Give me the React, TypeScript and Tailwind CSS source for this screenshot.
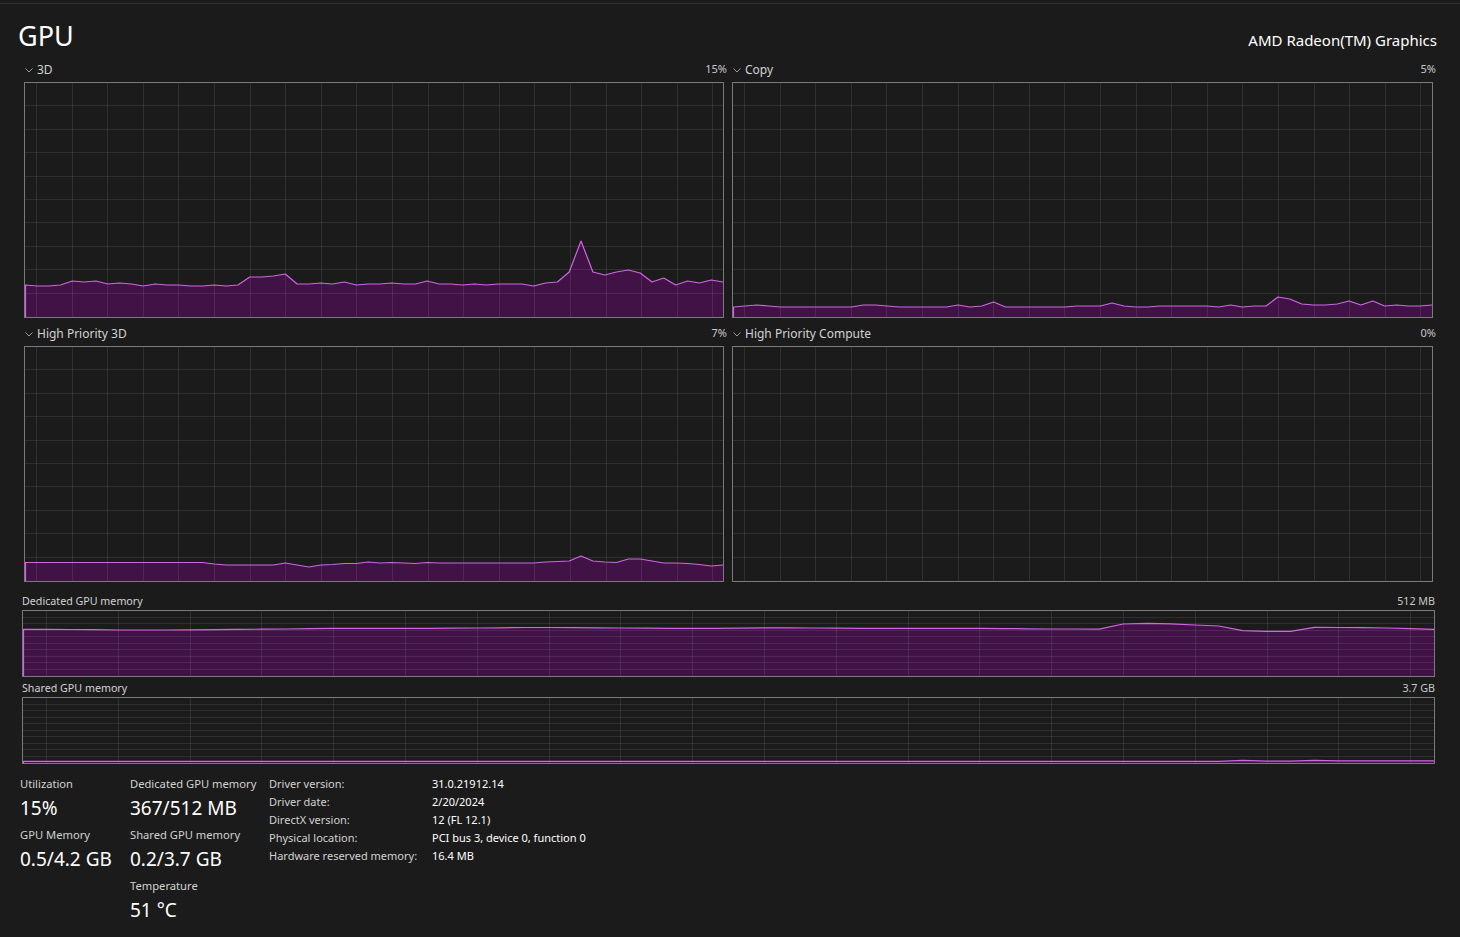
import React from "react";

const LINE = "#cf66e3";
const FILL = "#411245";

type GraphProps = {
  w: number;
  h: number;
  data?: number[];
  colStep: number;
  colStart: number;
  rows: number;
};

function Graph({ w, h, data, colStep, colStart, rows }: GraphProps) {
  const cols: number[] = [];
  for (let x = colStart; x < w; x += colStep) cols.push(Math.round(x) + 0.5);
  const hl: number[] = [];
  for (let k = 1; k < rows; k++) hl.push(Math.round((k * h) / rows) - 0.5);

  let area = "";
  let line = "";
  if (data) {
    const n = data.length;
    const pts = data.map((v, i) => [(i * w) / (n - 1), h - v]);
    area =
      `M0 ${h} ` +
      pts.map(([x, y]) => `L${x.toFixed(1)} ${y.toFixed(1)}`).join(" ") +
      ` L${w} ${h} Z`;
    line =
      `M0.5 ${h} L0.5 ${pts[0][1].toFixed(1)} ` +
      pts
        .slice(1)
        .map(([x, y]) => `L${x.toFixed(1)} ${y.toFixed(1)}`)
        .join(" ");
  }

  return (
    <svg width={w} height={h} viewBox={`0 0 ${w} ${h}`} className="block">
      {data && <path d={area} fill={FILL} />}
      <g stroke="#ffffff" strokeOpacity={0.09} strokeWidth={1} shapeRendering="crispEdges">
        {cols.map((x) => (
          <line key={"c" + x} x1={x} y1={0} x2={x} y2={h} />
        ))}
        {hl.map((y) => (
          <line key={"r" + y} x1={0} y1={y} x2={w} y2={y} />
        ))}
      </g>
      {data && <path d={line} fill="none" stroke={LINE} strokeWidth={1.2} strokeLinejoin="round" />}
    </svg>
  );
}

function Chevron() {
  return (
    <svg width="8" height="5" viewBox="0 0 8 5" className="mr-[4px] mb-[3px]">
      <path d="M0.5 0.5 L4 4 L7.5 0.5" fill="none" stroke="#9a9a9a" strokeWidth="1" />
    </svg>
  );
}

function EngineChart({
  name,
  pct,
  w,
  data,
}: {
  name: string;
  pct: string;
  w: number;
  data?: number[];
}) {
  return (
    <div className="flex flex-col">
      <div className="h-[28px] flex items-end justify-between pb-[6px] pl-[1px] -mr-[3px]">
        <div className="flex items-end">
          <Chevron />
          <span className="text-[12px] leading-[12px] text-[#d2d2d2]">{name}</span>
        </div>
        <span className="text-[11px] leading-[11px] text-[#c8c8c8] mb-[2px]">{pct}</span>
      </div>
      <div className="border border-[#7a7a7a] h-[236px]">
        <Graph w={w} h={234} data={data} colStep={35.6} colStart={11} rows={10} />
      </div>
    </div>
  );
}

function MemChart({ name, max, data, top }: { name: string; max: string; data: number[]; top: string }) {
  return (
    <div className="flex flex-col">
      <div className={`${top} flex items-end justify-between pb-[3px]`}>
        <span className="text-[10.7px] leading-[11px] text-[#d2d2d2]">{name}</span>
        <span className="text-[10.7px] leading-[11px] text-[#c8c8c8]">{max}</span>
      </div>
      <div className="border border-[#7a7a7a] h-[67px]">
        <Graph w={1411} h={65} data={data} colStep={71.8} colStart={23} rows={10} />
      </div>
    </div>
  );
}

const d3 = [
  32, 31, 31, 32, 36, 35, 36, 33, 34, 33, 31, 33, 32, 32, 31, 31, 32, 31, 32, 40, 40, 41, 43, 33, 33, 34, 33, 35, 32,
  33, 33, 34, 33, 33, 36, 33, 33, 32, 33, 32, 33, 33, 33, 31, 34, 35, 45, 76, 45, 42, 45, 47, 44, 35, 39, 32, 36, 34,
  37, 35,
];
const copy = [
  10, 11, 12, 11, 10, 10, 10, 10, 10, 10, 10, 12, 12, 11, 10, 10, 10, 10, 10, 12, 10, 11, 15, 10, 10, 10, 10, 10, 10,
  11, 11, 11, 14, 11, 10, 10, 11, 11, 11, 11, 11, 10, 12, 10, 11, 11, 20, 18, 13, 12, 12, 13, 16, 12, 16, 11, 12, 11,
  11, 12,
];
const hp3d = [
  18.5, 18.5, 18.5, 18.5, 18.5, 18.5, 18.5, 18.5, 18.5, 18.5, 18.5, 18.5, 18.5, 18.5, 18.5, 18.5, 17, 16, 16, 16, 16,
  16, 18, 16, 14, 16, 16.5, 17.5, 17.5, 19, 18, 18.5, 18, 17.5, 18.5, 18, 18, 18, 18, 18, 18, 18, 18, 18, 19, 19.5,
  20, 25, 20, 19, 18.5, 22, 22, 20, 18, 18, 17.5, 16.5, 15, 16,
];
const dedicated = [
  46.7, 46.7, 46.5, 46.3, 46, 46, 46, 46.2, 46.4, 46.6, 46.8, 47, 47.4, 47.6, 47.6, 47.6, 47.6, 47.6, 47.8, 48, 48.2,
  48.5, 48.5, 48.4, 48.2, 48, 47.8, 47.6, 47.6, 47.6, 47.8, 48.2, 48.2, 48, 47.8, 47.6, 47.6, 47.6, 47.6, 47.6, 47.6,
  47.4, 47.2, 47, 47, 46.8, 52, 52.7, 52.2, 51, 50, 45.3, 44.7, 44.7, 48.7, 48.5, 48.3, 48, 47.3, 46.7,
];
const shared = [
  1.6, 1.6, 1.6, 1.6, 1.6, 1.6, 1.6, 1.6, 1.6, 1.6, 1.6, 1.6, 1.6, 1.6, 1.6, 1.6, 1.6, 1.6, 1.6, 1.6, 1.6, 1.6, 1.6,
  1.6, 1.6, 1.6, 1.6, 1.6, 1.6, 1.6, 1.6, 1.6, 1.6, 1.6, 1.6, 1.6, 1.6, 1.6, 1.6, 1.6, 1.6, 1.6, 1.6, 1.6, 1.6, 1.6,
  1.6, 1.6, 1.6, 1.6, 1.6, 2.6, 1.8, 1.9, 2.6, 2.2, 2.2, 2.2, 2.2, 2.2,
];

function Stat({ label, value }: { label: string; value: string }) {
  return (
    <div className="flex flex-col mb-[6px]">
      <span className="text-[11.2px] leading-[16px] text-[#d2d2d2] mb-[3px] whitespace-nowrap">{label}</span>
      <span className="text-[19px] leading-[26px] text-white whitespace-nowrap">{value}</span>
    </div>
  );
}

const info: [string, string][] = [
  ["Driver version:", "31.0.21912.14"],
  ["Driver date:", "2/20/2024"],
  ["DirectX version:", "12 (FL 12.1)"],
  ["Physical location:", "PCI bus 3, device 0, function 0"],
  ["Hardware reserved memory:", "16.4 MB"],
];

export default function App() {
  return (
    <div className="min-h-[937px] w-full bg-[#1b1b1b] text-[#d6d6d6] font-['Noto_Sans',sans-serif] overflow-hidden">
      <div className="h-[3px]" />
      <div className="border-t border-[#2f2f2f]" />

      {/* Header */}
      <div className="h-[50px] flex items-start justify-between pl-[18px] pr-[23px]">
        <h1 className="mt-[18px] text-[27px] leading-[27px] text-white">GPU</h1>
        <span className="mt-[28px] text-[15px] leading-[16px] text-white">AMD Radeon(TM) Graphics</span>
      </div>

      {/* Engines */}
      <div className="grid grid-cols-[700px_701px] gap-x-[8px] pl-[24px]">
        <EngineChart name="3D" pct="15%" w={698} data={d3} />
        <EngineChart name="Copy" pct="5%" w={699} data={copy} />
        <EngineChart name="High Priority 3D" pct="7%" w={698} data={hp3d} />
        <EngineChart name="High Priority Compute" pct="0%" w={699} />
      </div>

      {/* Memory */}
      <div className="pl-[22px] w-[1435px]">
        <MemChart name="Dedicated GPU memory" max="512 MB" data={dedicated} top="h-[28px]" />
        <MemChart name="Shared GPU memory" max="3.7 GB" data={shared} top="h-[20px]" />
      </div>

      {/* Stats */}
      <div className="flex items-start pt-[12px] pl-[20px]">
        <div className="w-[110px] flex flex-col">
          <Stat label="Utilization" value="15%" />
          <Stat label="GPU Memory" value="0.5/4.2 GB" />
        </div>
        <div className="w-[139px] flex flex-col">
          <Stat label="Dedicated GPU memory" value="367/512 MB" />
          <Stat label="Shared GPU memory" value="0.2/3.7 GB" />
          <Stat label="Temperature" value="51 °C" />
        </div>
        <div className="-mt-[1px] flex flex-col">
          {info.map(([k, v]) => (
            <div key={k} className="flex text-[11px] leading-[18px]">
              <span className="w-[163px] text-[#d2d2d2]">{k}</span>
              <span className="text-white">{v}</span>
            </div>
          ))}
        </div>
      </div>
    </div>
  );
}
